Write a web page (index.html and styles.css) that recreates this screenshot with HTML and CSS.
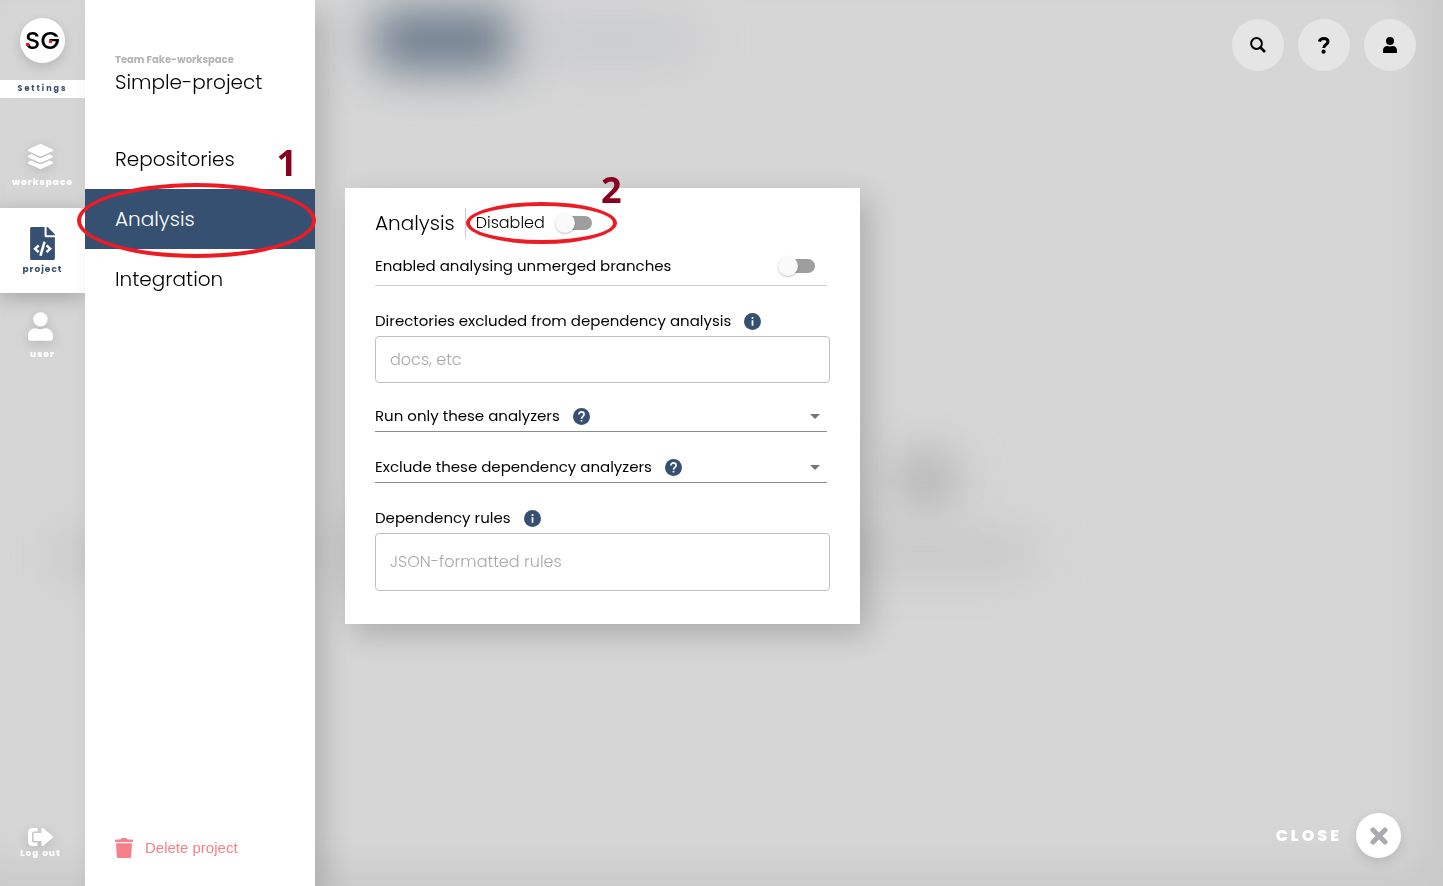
FILE: index.html
```html
<!DOCTYPE html>
<html lang="en">
<head>
    <meta charset="UTF-8">
    <meta name="viewport" content="width=device-width, initial-scale=1.0">
    <title>Simple-project settings</title>
    <link rel="stylesheet" href="styles.css">
</head>
<body>
    <div class="backdrop" aria-hidden="true">
        <span class="blob blob-button"></span>
        <span class="blob blob-tabs"></span>
        <span class="blob blob-dot"></span>
        <span class="blob blob-line"></span>
        <span class="blob blob-left"></span>
    </div>

    <aside class="rail">
        <a class="logo" href="#">SG<i class="logo-dot logo-dot-s"></i><i class="logo-dot logo-dot-g"></i></a>
        <div class="rail-title">Settings</div>
        <nav class="rail-nav">
            <a class="rail-item" href="#">
                <svg width="25" height="25" viewBox="0 0 512 512" fill="currentColor"><path d="M12.4 148l232.900 105.700c6.800 3.100 14.500 3.100 21.300 0l232.900-105.700c16.600-7.500 16.600-32.500 0-40L266.600 2.300a25.600 25.600 0 0 0-21.300 0L12.400 108c-16.600 7.500-16.600 32.500 0 40zm487.200 88.300l-58.100-26.300-161.600 73.300c-7.600 3.400-15.600 5.200-23.900 5.200s-16.300-1.700-23.900-5.200L70.500 210l-58.100 26.300c-16.600 7.500-16.600 32.500 0 40l232.900 105.600c6.800 3.100 14.500 3.100 21.300 0l233-105.600c16.500-7.500 16.500-32.500 0-40zm0 127.800l-57.900-26.200-161.800 73.400c-7.600 3.400-15.600 5.200-23.900 5.200s-16.300-1.700-23.900-5.200L70.300 337.900l-57.900 26.200c-16.600 7.500-16.600 32.500 0 40l232.900 105.600c6.800 3.100 14.500 3.100 21.300 0l233-105.600c16.500-7.500 16.500-32.500 0-40z"/></svg>
                <span>workspace</span>
            </a>
            <a class="rail-item active" href="#">
                <svg width="25" height="33" viewBox="0 0 384 512" fill="currentColor"><path d="M384 122v6H256V0h6c6.400 0 12.500 2.500 17 7l98 98c4.500 4.500 7 10.600 7 17zM248 160c-13 0-24-11-24-24V0H24C11 0 0 11 0 24v464c0 13 11 24 24 24h336c13 0 24-11 24-24V160H248zM123 401a6 6 0 0 1-8.500.2L52 343a6 6 0 0 1 0-8.700L114.500 276a6 6 0 0 1 8.500.2l19 20.300a6 6 0 0 1-.4 8.600L103 338.600l38.600 34a6 6 0 0 1 .4 8.600zm51 50.500l-27-7.900a6 6 0 0 1-4-7.400l60.500-208.100a6 6 0 0 1 7.400-4.100l27 7.900a6 6 0 0 1 4 7.400L181.400 447.500a6 6 0 0 1-7.400 4zM335 343l-62.400 58.400a6 6 0 0 1-8.500-.2l-19-20.300a6 6 0 0 1 .4-8.600l38.600-34-38.600-34a6 6 0 0 1-.4-8.600l19-20.300a6 6 0 0 1 8.500-.2l62.400 58.700a6 6 0 0 1 0 8.700z"/></svg>
                <span>project</span>
            </a>
            <a class="rail-item" href="#">
                <svg width="25" height="29" viewBox="0 0 448 512" fill="currentColor"><path d="M224 256a128 128 0 1 0 0-256 128 128 0 1 0 0 256zm89.600 32h-16.700c-22.200 10.200-46.900 16-72.900 16s-50.600-5.800-72.900-16h-16.700C60.200 288 0 348.200 0 422.400V464c0 26.500 21.500 48 48 48h352c26.500 0 48-21.500 48-48v-41.600c0-74.200-60.200-134.400-134.400-134.400z"/></svg>
                <span>user</span>
            </a>
        </nav>
        <a class="rail-logout" href="#">
            <svg width="25" height="18" viewBox="0 0 50 36" fill="currentColor"><path d="M19 0v7h-6c-4 0-5 1-5 5v12c0 4 1 5 5 5h6v7H11C3 36 0 33 0 25V11C0 3 3 0 11 0z"/><path d="M13 10h14V2c0-2 2-3 4-1l18 15c1 1 1 3 0 4L31 35c-2 2-4 1-4-1v-8H13c-1 0-2-1-2-2V12c0-1 1-2 2-2z"/></svg>
            <span>Log out</span>
        </a>
    </aside>

    <aside class="sidebar">
        <header class="sidebar-head">
            <p class="team">Team Fake-workspace</p>
            <h1>Simple-project</h1>
        </header>
        <nav class="menu">
            <a class="menu-item" href="#">Repositories<b class="step step-one">1</b></a>
            <a class="menu-item active" href="#">Analysis<span class="ring ring-menu"></span></a>
            <a class="menu-item" href="#">Integration</a>
        </nav>
        <button class="delete" type="button">
            <svg width="18" height="20" viewBox="0 0 18 20" fill="currentColor"><path d="M0 2.500Q0 1.500 1 1.500H5.500L6.500 .3Q6.700 0 7 0H11Q11.300 0 11.500 .3L12.500 1.500H17Q18 1.500 18 2.500V3.900H0zM1 5.200H17L16.200 18.600Q16.100 20 14.800 20H3.200Q1.900 20 1.800 18.600z"/></svg>
            Delete project
        </button>
    </aside>

    <main class="content">
        <div class="top-actions">
            <button class="round" type="button" aria-label="Search">
                <svg width="16" height="16" viewBox="0 0 16 16" fill="none" stroke="currentColor" stroke-width="2"><circle cx="6.500" cy="6.500" r="5.400"/><path d="M10.500 10.500L15 15" stroke-width="2.600"/></svg>
            </button>
            <button class="round" type="button" aria-label="Help">
                <svg width="12" height="17" viewBox="0 0 12 17" fill="none" stroke="currentColor" stroke-width="3"><path d="M1.300 4.600C2 2.600 3.600 1.600 5.800 1.600C8.400 1.600 10 2.900 10 4.800C10 7.600 5.700 7.600 5.700 11"/><circle cx="5.600" cy="14.700" r="2.100" fill="currentColor" stroke="none"/></svg>
            </button>
            <button class="round" type="button" aria-label="Account">
                <svg width="14" height="16" viewBox="0 0 448 512" fill="currentColor"><path d="M224 256a128 128 0 1 0 0-256 128 128 0 1 0 0 256zm89.600 32h-16.700c-22.200 10.200-46.900 16-72.900 16s-50.600-5.800-72.900-16h-16.700C60.200 288 0 348.200 0 422.400V512h448v-89.600c0-74.200-60.200-134.400-134.400-134.400z"/></svg>
            </button>
        </div>

        <section class="card">
            <div class="card-head">
                <h2>Analysis</h2>
                <label class="status" for="analysis">Disabled</label>
                <input class="switch" type="checkbox" id="analysis">
                <span class="ring ring-switch"></span>
                <b class="step step-two">2</b>
            </div>
            <div class="branch-row">
                <label for="branches">Enabled analysing unmerged branches</label>
                <input class="switch" type="checkbox" id="branches">
            </div>

            <div class="field">
                <div class="field-label">
                    <label for="directories">Directories excluded from dependency analysis</label>
                    <svg class="hint" viewBox="0 0 24 24"><circle cx="12" cy="12" r="12"/><path d="M12 5.600v2.800M12 10.400v7.600"/></svg>
                </div>
                <input class="box" type="text" id="directories" placeholder="docs, etc">
            </div>

            <div class="select-row">
                <label for="run-only">Run only these analyzers</label>
                <svg class="hint" viewBox="0 0 24 24"><circle cx="12" cy="12" r="12"/><path d="M8.400 9.200C8.400 7 10 5.600 12 5.600S15.600 7 15.600 9C15.600 11.600 12 11.900 12 15M12 16.800v2.400"/></svg>
                <select id="run-only"><option></option></select>
                <svg class="arrow" viewBox="0 0 10 5"><path d="M0 0h10L5 5z"/></svg>
            </div>
            <div class="select-row">
                <label for="exclude">Exclude these dependency analyzers</label>
                <svg class="hint" viewBox="0 0 24 24"><circle cx="12" cy="12" r="12"/><path d="M8.400 9.200C8.400 7 10 5.600 12 5.600S15.600 7 15.600 9C15.600 11.600 12 11.900 12 15M12 16.800v2.400"/></svg>
                <select id="exclude"><option></option></select>
                <svg class="arrow" viewBox="0 0 10 5"><path d="M0 0h10L5 5z"/></svg>
            </div>

            <div class="field">
                <div class="field-label">
                    <label for="rules">Dependency rules</label>
                    <svg class="hint" viewBox="0 0 24 24"><circle cx="12" cy="12" r="12"/><path d="M12 5.600v2.800M12 10.400v7.600"/></svg>
                </div>
                <textarea class="box" id="rules" rows="1" placeholder="JSON-formatted rules"></textarea>
            </div>
        </section>

        <button class="close" type="button">
            CLOSE
            <span class="close-icon">
                <svg width="18" height="18" viewBox="0 0 18 18" fill="none" stroke="currentColor" stroke-width="5" stroke-linecap="round"><path d="M3 3l12 12M15 3L3 15"/></svg>
            </span>
        </button>
    </main>
</body>
</html>
```

FILE: styles.css
```css
* {
    box-sizing: border-box;
}

body {
    margin: 0;
    min-height: 100vh;
    display: flex;
    background: #d6d6d6;
    color: #000;
    font-family: Poppins, Inter, sans-serif;
    font-size: 15px;
    line-height: 20px;
}

a {
    color: inherit;
    text-decoration: none;
}

h1, h2, p {
    margin: 0;
}

button {
    border: 0;
    padding: 0;
    background: none;
    font-family: inherit;
    cursor: pointer;
}

/* Blurred page behind the settings overlay */
.backdrop {
    position: fixed;
    inset: 0;
    z-index: -1;
    overflow: hidden;
    box-shadow: inset -24px -20px 40px rgba(0, 0, 0, 0.06);
}

.blob {
    position: absolute;
    filter: blur(24px);
}

.blob-button {
    left: 372px;
    top: 10px;
    width: 144px;
    height: 60px;
    border-radius: 20px;
    background: #687888;
}

.blob-tabs {
    left: 530px;
    top: 20px;
    width: 165px;
    height: 40px;
    background: #c8c9cd;
}

.blob-dot {
    left: 896px;
    top: 452px;
    width: 60px;
    height: 56px;
    border-radius: 50%;
    background: #acacac;
}

.blob-line {
    left: 320px;
    top: 532px;
    width: 715px;
    height: 40px;
    background: #c6c6c6;
}

.blob-left {
    left: 56px;
    top: 536px;
    width: 60px;
    height: 40px;
    background: #c4c4c4;
}

/* Icon rail */
.rail {
    width: 85px;
    display: flex;
    flex-direction: column;
    align-items: center;
    color: #fff;
    font-size: 9px;
    font-weight: 800;
    line-height: 10px;
    letter-spacing: 1px;
}

.logo {
    position: relative;
    width: 45px;
    height: 45px;
    margin: 18px 0 17px;
    border-radius: 50%;
    background: #fff;
    box-shadow: 0 4px 12px rgba(0, 0, 0, 0.15);
    color: #000;
    font-size: 25px;
    font-weight: 500;
    line-height: 45px;
    letter-spacing: 0;
    text-align: center;
}

.logo-dot {
    position: absolute;
    width: 3px;
    height: 3px;
    background: #ed1c24;
}

.logo-dot-s {
    left: 6px;
    top: 25px;
}

.logo-dot-g {
    left: 29px;
    top: 22px;
}

.rail-title {
    width: 100%;
    background: #fff;
    color: #355070;
    font-size: 8px;
    font-weight: 700;
    line-height: 18px;
    letter-spacing: 2px;
    text-align: center;
}

.rail-nav {
    width: 100%;
    margin-top: 25px;
}

.rail-item {
    height: 85px;
    display: flex;
    flex-direction: column;
    align-items: center;
    justify-content: center;
    gap: 8px;
}

.rail-item svg,
.rail-logout svg {
    margin-right: 4px;
    filter: drop-shadow(0 3px 6px rgba(0, 0, 0, 0.15));
}

.rail-item.active {
    gap: 4px;
    background: #fff;
    color: #355070;
    font-weight: 700;
    box-shadow: 0 4px 20px rgba(0, 0, 0, 0.25);
}

.rail-item.active svg {
    margin-right: 0;
    filter: none;
}

.rail-logout {
    margin-top: auto;
    padding: 0 4px 28px 0;
    display: flex;
    flex-direction: column;
    align-items: center;
    gap: 2px;
}

.rail-logout svg {
    margin-right: 0;
}

/* Project menu */
.sidebar {
    position: relative;
    width: 230px;
    display: flex;
    flex-direction: column;
    background: #fff;
    box-shadow: 12px 12px 24px rgba(0, 0, 0, 0.15);
}

.sidebar-head {
    height: 129px;
    padding: 52px 30px 0;
}

.team {
    color: #b4b4b4;
    font-size: 10px;
    font-weight: 700;
    line-height: 15px;
}

h1, h2, .menu-item {
    font-size: 20px;
    font-weight: 300;
    line-height: 30px;
}

.menu-item {
    position: relative;
    display: block;
    padding: 15px 30px;
}

.menu-item.active {
    background: #355070;
    color: #fff;
}

.delete {
    display: flex;
    align-items: center;
    gap: 12px;
    margin-top: auto;
    padding: 0 30px 28px;
    color: #f5808a;
    font-family: "Liberation Sans", Arial, sans-serif;
    font-size: 15px;
    line-height: 20px;
}

/* Numbered marks over the controls */
.ring {
    position: absolute;
    z-index: 1;
    border: 4px solid #ed1c24;
    border-radius: 50%;
    pointer-events: none;
}

.ring-menu {
    inset: -6px -1px -9px -8px;
}

.ring-switch {
    left: 91px;
    top: -6px;
    width: 151px;
    height: 42px;
}

.step {
    position: absolute;
    color: #880020;
    font-family: "Open Sans", sans-serif;
    font-size: 36px;
    font-weight: 700;
    line-height: 36px;
}

.step-one {
    right: 18px;
    top: 16px;
}

.step-two {
    left: 226px;
    top: -36px;
}

/* Main area */
.content {
    flex: 1;
    display: flex;
    flex-direction: column;
    align-items: flex-start;
}

.top-actions {
    align-self: flex-end;
    display: flex;
    gap: 14px;
    padding: 19px 27px 0 0;
}

.round {
    width: 52px;
    height: 52px;
    display: flex;
    align-items: center;
    justify-content: center;
    border-radius: 50%;
    background: #e5e5e5;
    color: #000;
}

.card {
    width: 515px;
    margin: 117px 30px 30px;
    padding: 20px 30px 33px;
    background: #fff;
    box-shadow: 8px 10px 30px rgba(0, 0, 0, 0.2);
}

.card-head {
    position: relative;
    display: flex;
    align-items: center;
    height: 30px;
}

h2 {
    padding-right: 10px;
    border-right: 1px solid #ccc;
}

.status {
    padding: 0 10px;
    font-size: 16px;
    font-weight: 300;
    line-height: 22px;
}

.switch {
    appearance: none;
    position: relative;
    width: 37px;
    height: 20px;
    margin: 0;
    cursor: pointer;
}

.switch::before {
    content: "";
    position: absolute;
    inset: 3px 0 3px 3px;
    border-radius: 7px;
    background: #9e9e9e;
}

.switch::after {
    content: "";
    position: absolute;
    left: 0;
    top: 0;
    width: 20px;
    height: 20px;
    border-radius: 50%;
    background: #fafafa;
    box-shadow: 0 1px 2px rgba(0, 0, 0, 0.25);
}

.switch:checked::after {
    left: 17px;
}

.branch-row {
    display: flex;
    align-items: center;
    justify-content: space-between;
    margin: 18px 3px 25px 0;
    padding: 0 12px 9px 0;
    border-bottom: 1px solid #ccc;
}

.field-label {
    display: flex;
    align-items: center;
    gap: 13px;
    margin-bottom: 5px;
}

.hint {
    width: 17px;
    height: 17px;
    fill: #355070;
}

.hint path {
    fill: none;
    stroke: #fff;
    stroke-width: 2.400;
}

.box {
    display: block;
    width: 100%;
    height: 47px;
    padding: 12px 14px;
    border: 1px solid #c0c0c0;
    border-radius: 4px;
    background: #fff;
    font-family: inherit;
    font-size: 16px;
    font-weight: 300;
    line-height: 22px;
}

textarea.box {
    height: 58px;
    padding: 17px 14px;
    resize: none;
}

.box::placeholder {
    color: #a8a8a8;
}

.select-row {
    position: relative;
    display: flex;
    align-items: center;
    gap: 13px;
    height: 28px;
    margin: 0 3px 23px 0;
    padding-bottom: 3px;
    border-bottom: 1px solid #8c8c8c;
}

.field + .select-row {
    margin-top: 21px;
}

.select-row + .field {
    margin-top: 25px;
}

.select-row select {
    appearance: none;
    flex: 1;
    border: 0;
    background: none;
    font: inherit;
}

.arrow {
    position: absolute;
    right: 7px;
    top: 10px;
    width: 10px;
    height: 5px;
    fill: #757575;
    pointer-events: none;
}

.close {
    align-self: flex-end;
    display: flex;
    align-items: center;
    gap: 14px;
    margin-top: auto;
    padding: 0 42px 28px 0;
    color: #fff;
    font-size: 16px;
    font-weight: 800;
    letter-spacing: 3px;
}

.close-icon {
    width: 45px;
    height: 45px;
    display: flex;
    align-items: center;
    justify-content: center;
    border-radius: 50%;
    background: #fff;
    color: #aaabae;
    box-shadow: 0 4px 12px rgba(0, 0, 0, 0.12);
}
```
